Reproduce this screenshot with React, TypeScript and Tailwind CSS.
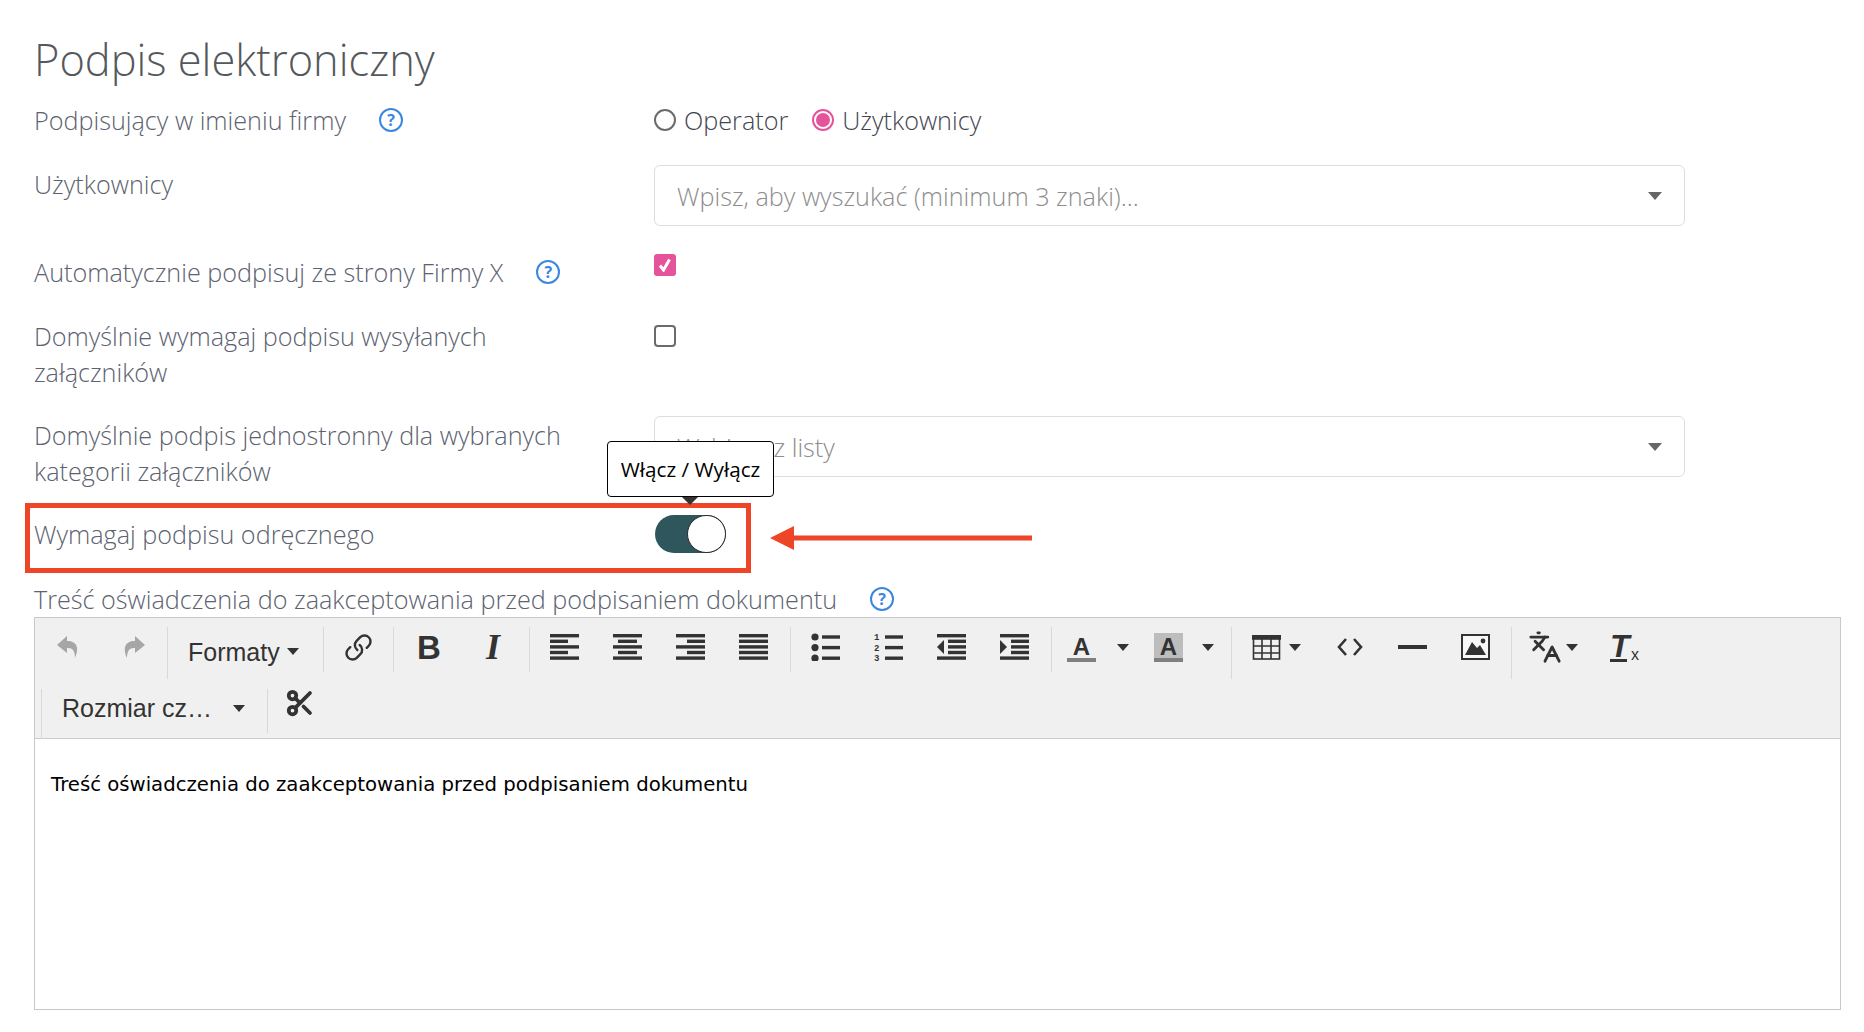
import type { ReactNode } from "react";
import { Languages, Link, Scissors } from "lucide-react";

function Help() {
  return (
    <span className="flex h-6 w-6 shrink-0 items-center justify-center rounded-full border-2 border-[#3b86e0] font-['Open_Sans'] text-[16px] leading-none font-bold text-[#3b86e0]">
      ?
    </span>
  );
}

function Caret({ className = "" }: { className?: string }) {
  return <span className={`h-0 w-0 border-x-[6px] border-t-[7px] border-x-transparent border-t-[#333] ${className}`} />;
}

function Bars({ rows }: { rows: [number, number][] }) {
  return (
    <svg width="29" height="26" viewBox="0 0 29 26" fill="#333">
      {rows.map(([x, w], i) => (
        <rect key={i} x={x} y={i * 5.6} width={w} height="3.4" />
      ))}
    </svg>
  );
}

function ListIcon({ numbered }: { numbered?: boolean }) {
  return (
    <svg width="29" height="28" viewBox="0 0 29 28" fill="#333">
      {[0, 1, 2].map((i) => (
        <g key={i}>
          {numbered ? (
            <text x="0" y={7 + i * 10.6} fontSize="9" fontWeight="700" fontFamily="Liberation Mono, monospace">
              {i + 1}
            </text>
          ) : (
            <circle cx="4" cy={4 + i * 10.6} r="3.6" />
          )}
          <rect x="11" y={2.3 + i * 10.6} width="18" height="3.4" />
        </g>
      ))}
    </svg>
  );
}

function IndentIcon({ out }: { out?: boolean }) {
  return (
    <svg width="29" height="26" viewBox="0 0 29 26" fill="#333">
      <rect x="0" y="0" width="29" height="3.4" />
      <rect x="11" y="5.6" width="18" height="3.4" />
      <rect x="11" y="11.2" width="18" height="3.4" />
      <rect x="11" y="16.8" width="18" height="3.4" />
      <rect x="0" y="22.4" width="29" height="3.4" />
      <path d={out ? "M7 6 L0 13 L7 20 Z" : "M0 6 L7 13 L0 20 Z"} />
    </svg>
  );
}

function Btn({ children, w = "w-[63px]" }: { children: ReactNode; w?: string }) {
  return <div className={`flex h-[56px] items-center justify-center ${w}`}>{children}</div>;
}

function Group({ children, sep = "h-[45px]", wide }: { children: ReactNode; sep?: string; wide?: boolean }) {
  return (
    <div className={`relative flex pl-[4px] ${wide ? "pr-[5px]" : "pr-[4px]"}`}>
      <span className={`absolute top-[8px] left-0 w-px bg-[#d9d9d9] ${sep}`} />
      {children}
    </div>
  );
}

function Letter({ marked }: { marked?: boolean }) {
  return (
    <span className={`relative flex h-[29px] w-[29px] justify-center font-['Liberation_Sans'] text-[24px] leading-[27px] font-bold text-[#333] ${marked ? "bg-[#bdbdbd]" : ""}`}>
      A
      <span className="absolute bottom-0 left-0 h-[4px] w-full bg-[#808080]" />
    </span>
  );
}

function Toolbar() {
  return (
    <div className="h-[121px] border-b border-[#cccccc] bg-[#f0f0f0] font-['Liberation_Sans'] text-[#333]">
      <div className="flex h-[63px] items-start pt-[1px]">
        <div className="flex">
          <Btn w="w-[66px]">
            <svg width="24" height="26" viewBox="0 0 24 26" fill="#a6a6a6">
              <path d="M11 2 L1 11 L11 19 V14 C16 13.5 19 16 19 24 C23 15 22 7 11 7 Z" />
            </svg>
          </Btn>
          <Btn w="w-[66px]">
            <svg width="24" height="26" viewBox="0 0 24 26" fill="#a6a6a6">
              <path d="M13 2 L23 11 L13 19 V14 C8 13.5 5 16 5 24 C1 15 2 7 13 7 Z" />
            </svg>
          </Btn>
        </div>
        <Group sep="h-[52px]">
          <div className="flex h-[56px] w-[148px] items-center gap-[7px] pt-[9px] pl-[17px] text-[25px]">
            Formaty
            <Caret />
          </div>
        </Group>
        <Group>
          <Btn w="w-[62px]">
            <Link size={29} strokeWidth={2} className="-scale-x-100 rotate-90" />
          </Btn>
        </Group>
        <Group>
          <Btn w="w-[64px]">
            <span className="text-[33px] leading-none font-bold">B</span>
          </Btn>
          <Btn w="w-[64px]">
            <span className="font-['Liberation_Serif'] text-[36px] leading-none font-bold italic">I</span>
          </Btn>
        </Group>
        <Group wide>
          <Btn><Bars rows={[[0, 29], [0, 18], [0, 29], [0, 18], [0, 29]]} /></Btn>
          <Btn><Bars rows={[[0, 29], [5, 19], [0, 29], [5, 19], [0, 29]]} /></Btn>
          <Btn><Bars rows={[[0, 29], [11, 18], [0, 29], [11, 18], [0, 29]]} /></Btn>
          <Btn><Bars rows={[[0, 29], [0, 29], [0, 29], [0, 29], [0, 29]]} /></Btn>
        </Group>
        <Group wide>
          <Btn><ListIcon /></Btn>
          <Btn><ListIcon numbered /></Btn>
          <Btn><IndentIcon out /></Btn>
          <Btn><IndentIcon /></Btn>
        </Group>
        <Group>
          <div className="flex h-[56px] w-[172px] items-center pl-[12px]">
            <Letter />
            <Caret className="ml-[21px]" />
            <span className="ml-[25px]"><Letter marked /></span>
            <Caret className="ml-[19px]" />
          </div>
        </Group>
        <Group sep="h-[52px]">
          <Btn w="w-[83px]">
            <svg width="29" height="25" viewBox="0 0 28 25" fill="none" stroke="#333" strokeWidth="1.6">
              <rect x="1" y="1" width="26" height="23" />
              <rect x="0" y="0" width="28" height="4" fill="#333" />
              <path d="M9.5 4V24M18.5 4V24M1 11H27M1 18H27" />
            </svg>
            <Caret className="ml-[8px]" />
          </Btn>
          <Btn>
            <svg width="26" height="22" viewBox="0 0 26 22" fill="none" stroke="#333" strokeWidth="2.6">
              <path d="M9 3 L2 11 L9 19M17 3 L24 11 L17 19" />
            </svg>
          </Btn>
          <Btn>
            <span className="h-[4px] w-[29px] bg-[#333]" />
          </Btn>
          <Btn>
            <svg width="29" height="26" viewBox="0 0 29 26">
              <rect x="1" y="1" width="27" height="24" fill="#f8f8f8" stroke="#333" strokeWidth="2" />
              <path d="M4 21 L11 8 L16 14 L19 11 L25 21 Z" fill="#333" />
              <circle cx="22" cy="7" r="2.4" fill="#333" />
            </svg>
          </Btn>
        </Group>
        <Group sep="h-[52px]">
          <Btn w="w-[75px]">
            <Languages size={34} strokeWidth={2} className="mr-[1px]" />
            <Caret className="ml-[3px]" />
          </Btn>
          <Btn w="w-[70px]">
            <span className="relative flex h-[30px] w-[30px] font-['Liberation_Sans'] text-[32px] leading-[28px] font-bold italic">
              T
              <span className="absolute bottom-0 left-0 h-[3px] w-[17px] bg-[#333]" />
              <span className="absolute right-[1px] bottom-[-1px] text-[16px] leading-none font-normal not-italic">x</span>
            </span>
          </Btn>
        </Group>
      </div>
      <div className="flex h-[56px] items-start pl-[6px]">
        <Group sep="h-[50px]">
          <div className="flex h-[54px] w-[218px] items-center pl-[17px] text-[25px]">
            Rozmiar cz…
            <Caret className="ml-[21px]" />
          </div>
        </Group>
        <Group sep="h-[44px]">
          <Btn w="w-[58px]">
            <Scissors size={30} strokeWidth={3} className="mb-[12px]" />
          </Btn>
        </Group>
      </div>
    </div>
  );
}

function Select({ text, className = "" }: { text: string; className?: string }) {
  return (
    <div className={`flex h-[61px] w-[1031px] items-center justify-between rounded-[6px] border border-[#dddddd] pr-[22px] pl-[22px] text-[25.2px] font-light text-[#8d8d8d] ${className}`}>
      <span>{text}</span>
      <span className="h-0 w-0 border-x-[7px] border-t-[8px] border-x-transparent border-t-[#666]" />
    </div>
  );
}

export default function App() {
  return (
    <div className="relative h-[1032px] w-[1864px] overflow-hidden bg-white pl-[34px] font-['Open_Sans',sans-serif] text-[25.2px] leading-[36px] font-light text-[#5c6270]">
      <h1 className="pt-[32px] text-[43.4px] leading-[56px] font-light text-[#55585c]">Podpis elektroniczny</h1>

      <div className="mt-[14px] flex h-[36px] items-center">
        <div className="flex w-[620px] items-center gap-[33px]">
          Podpisujący w imieniu firmy
          <Help />
        </div>
        <span className="h-[22px] w-[22px] rounded-full border-2 border-[#6b6b6b]" />
        <span className="ml-[8px] text-[#3f4650]">Operator</span>
        <span className="ml-[24px] flex h-[22px] w-[22px] items-center justify-center rounded-full border-2 border-[#e5549b]">
          <span className="h-[14px] w-[14px] rounded-full bg-[#e5549b]" />
        </span>
        <span className="ml-[8px] text-[#3f4650]">Użytkownicy</span>
      </div>

      <div className="mt-[27px] flex items-start">
        <div className="mt-[1px] w-[620px]">Użytkownicy</div>
        <Select text="Wpisz, aby wyszukać (minimum 3 znaki)..." />
      </div>

      <div className="mt-[28px] flex items-start">
        <div className="flex w-[620px] items-center gap-[33px]">
          Automatycznie podpisuj ze strony Firmy X
          <Help />
        </div>
        <span className="flex h-[22px] w-[22px] items-center justify-center rounded-[3px] bg-[#e5549b]">
          <svg width="14" height="14" viewBox="0 0 14 14" fill="none" stroke="#fff" strokeWidth="3">
            <path d="M2 7.5 L5.5 12 L11.5 1.5" />
          </svg>
        </span>
      </div>

      <div className="mt-[28px] flex items-start">
        <div className="w-[620px]">
          Domyślnie wymagaj podpisu wysyłanych
          <br />
          załączników
        </div>
        <span className="mt-[7px] h-[22px] w-[22px] rounded-[4px] border-2 border-[#6b6b6b]" />
      </div>

      <div className="mt-[27px] flex items-start">
        <div className="w-[620px]">
          Domyślnie podpis jednostronny dla wybranych
          <br />
          kategorii załączników
        </div>
        <Select text="Wybierz z listy" className="-mt-[1px]" />
      </div>

      <div className="mt-[27px] flex h-[36px] items-center">
        <div className="w-[620px]">Wymagaj podpisu odręcznego</div>
        <span className="ml-[1px] flex h-[38px] w-[71px] justify-end rounded-full bg-[#2f565c]">
          <span className="h-[38px] w-[39px] rounded-full border border-[#2b2b2b] bg-white" />
        </span>
      </div>

      <div className="mt-[29px] flex h-[36px] items-center gap-[33px]">
        Treść oświadczenia do zaakceptowania przed podpisaniem dokumentu
        <Help />
      </div>

      <div className="h-[393px] w-[1807px] border border-[#c8c8c8]">
        <Toolbar />
        <p className="pt-[34px] pl-[16px] font-['DejaVu_Sans'] text-[19.7px] leading-[24px] font-normal text-black">
          Treść oświadczenia do zaakceptowania przed podpisaniem dokumentu
        </p>
      </div>

      {/* annotation over the form */}
      <div className="absolute top-[503px] left-[25px] h-[70px] w-[726px] border-[5px] border-[#ee4528]" />
      <div className="absolute top-[441px] left-[607px] flex h-[56px] w-[167px] items-center justify-center rounded-[4px] border border-black bg-white text-[20.7px] font-normal text-black">
        Włącz / Wyłącz
      </div>
      <span className="absolute top-[497px] left-[682px] h-0 w-0 border-x-[8px] border-t-[8px] border-x-transparent border-t-[#333]" />
      <svg className="absolute top-[526px] left-[770px]" width="262" height="24" viewBox="0 0 262 24" fill="#ee4528">
        <path d="M0 12 L24 0 V9.5 H262 V14.5 H24 V24 Z" />
      </svg>
    </div>
  );
}
